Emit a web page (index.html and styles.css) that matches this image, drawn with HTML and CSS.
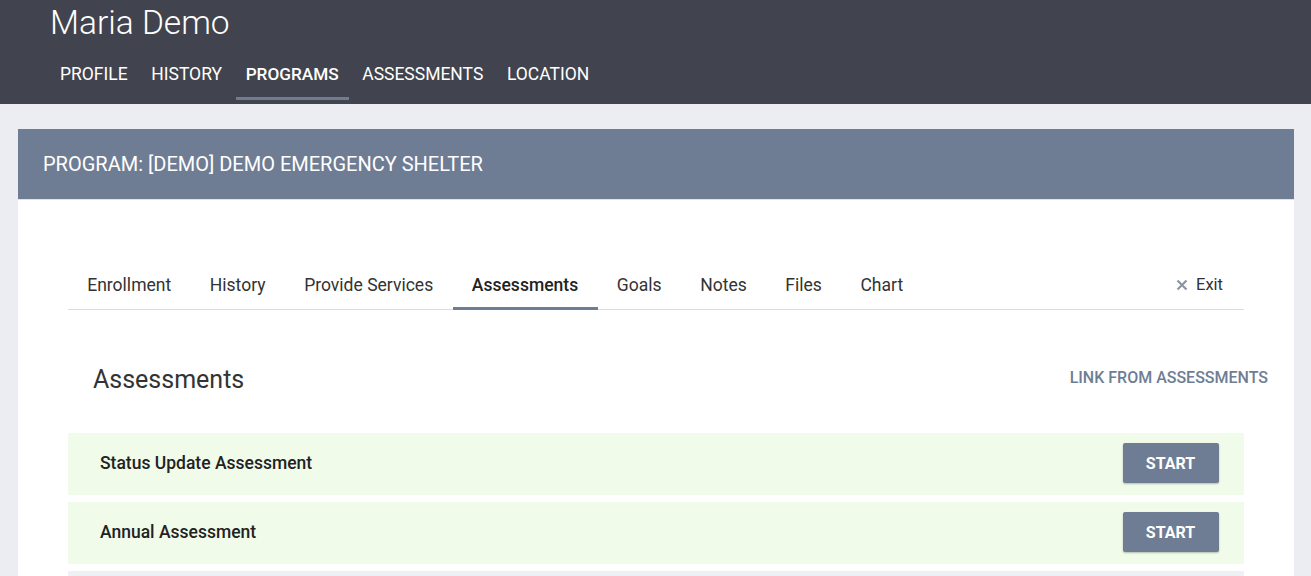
FILE: index.html
```html
<!DOCTYPE html>
<html lang="en">
<head>
<meta charset="utf-8">
<title>Maria Demo - Programs</title>
<link rel="stylesheet" href="styles.css">
</head>
<body>
<header class="top">
  <h1 class="client-name">Maria Demo</h1>
  <nav class="main-nav">
    <a class="main-nav__item">PROFILE</a>
    <a class="main-nav__item">HISTORY</a>
    <a class="main-nav__item main-nav__item--active">PROGRAMS</a>
    <a class="main-nav__item">ASSESSMENTS</a>
    <a class="main-nav__item">LOCATION</a>
  </nav>
</header>
<main class="page">
  <section class="card">
    <div class="card__header">PROGRAM: [DEMO] DEMO EMERGENCY SHELTER</div>
    <div class="card__body">
      <div class="tabs">
        <a class="tab">Enrollment</a>
        <a class="tab">History</a>
        <a class="tab">Provide Services</a>
        <a class="tab tab--active">Assessments</a>
        <a class="tab">Goals</a>
        <a class="tab">Notes</a>
        <a class="tab">Files</a>
        <a class="tab">Chart</a>
        <a class="tab tab--exit"><svg class="exit-x" width="12" height="12" viewBox="0 0 12 12" aria-hidden="true"><path d="M1.5 1.5 L10.5 10.5 M10.5 1.5 L1.5 10.5" stroke="#8d95a3" stroke-width="2.2" stroke-linecap="butt" fill="none"/></svg>Exit</a>
      </div>
      <div class="section-head">
        <h2 class="section-title">Assessments</h2>
        <a class="link-btn">LINK FROM ASSESSMENTS</a>
      </div>
      <div class="rows">
        <div class="row row--due">
          <span class="row__name">Status Update Assessment</span>
          <button class="start-btn">START</button>
        </div>
        <div class="row row--due">
          <span class="row__name">Annual Assessment</span>
          <button class="start-btn">START</button>
        </div>
        <div class="row row--other"></div>
      </div>
    </div>
  </section>
</main>
</body>
</html>
```
FILE: styles.css
```css
* { box-sizing: border-box; }
html, body { margin: 0; padding: 0; }
body {
  background: #ecedf2;
  font-family: Roboto, "Liberation Sans", sans-serif;
  color: #222;
}
a { text-decoration: none; color: inherit; cursor: pointer; }

.top {
  background: #41444e;
  padding: 3px 0 4px 50px;
}
.client-name {
  margin: 0;
  font-weight: 300;
  font-size: 33.5px;
  line-height: 40px;
  color: #ffffff;
}
.main-nav {
  display: flex;
  margin-top: 21px;
}
.main-nav__item {
  padding: 0 10px 13px;
  margin-right: 3.6px;
  font-size: 17.5px;
  line-height: 20px;
  color: #ffffff;
  border-bottom: 3px solid transparent;
}
.main-nav__item--active {
  font-weight: 500;
  font-size: 17.2px;
  border-bottom-color: #6f7d94;
}

.page {
  padding: 25px 17px 0 18px;
}
.card {
  background: #ffffff;
}
.card__header {
  height: 71px;
  background: #6f7d94;
  border-bottom: 1px solid #dfe3ea;
  padding-left: 25px;
  display: flex;
  align-items: center;
  color: #ffffff;
  font-size: 20px;
  font-weight: 400;
  padding-bottom: 1px;
}
.card__body {
  padding: 73px 50px 0;
}

.tabs {
  display: flex;
  align-items: flex-end;
  border-bottom: 1px solid #dddddd;
}
.tab {
  padding: 0 19.4px 10px 19.2px;
  font-size: 17.55px;
  line-height: 24px;
  color: #333333;
  border-bottom: 3px solid transparent;
  margin-bottom: -1px;
}
.tab--active {
  font-weight: 500;
  color: #222222;
  border-bottom-color: #6f7d94;
}
.tab--exit {
  margin-left: auto;
  padding-right: 21px;
  font-size: 16.5px;
  display: flex;
  align-items: center;
}
.exit-x {
  margin-right: 8px;
  margin-top: -1px;
}

.section-head {
  display: flex;
  align-items: center;
  justify-content: space-between;
  height: 60px;
  margin: 39px -24px 24px 0;
  padding-left: 25px;
}
.section-title {
  margin: 0;
  font-size: 25px;
  font-weight: 400;
  color: #333333;
}
.link-btn {
  font-size: 16px;
  font-weight: 500;
  color: #6f7d94;
  padding-bottom: 4px;
}

.rows {
  display: flex;
  flex-direction: column;
  gap: 7px;
}
.row {
  height: 62px;
  display: flex;
  align-items: center;
  justify-content: space-between;
  padding: 0 25px 0 32px;
}
.row--due { background: #f1fbea; }
.row--other { background: #eff0f4; }
.row__name {
  font-size: 17.5px;
  font-weight: 500;
  color: #222222;
  margin-top: -2px;
}
.start-btn {
  width: 96px;
  height: 40px;
  border: 0;
  border-radius: 2px;
  background: #6f7d94;
  color: #ffffff;
  font-family: Roboto, "Liberation Sans", sans-serif;
  font-size: 16px;
  font-weight: 700;
  box-shadow: 0 1px 2px rgba(0, 0, 0, 0.25);
  margin-top: -2px;
  margin-right: 0.5px;
}
```
